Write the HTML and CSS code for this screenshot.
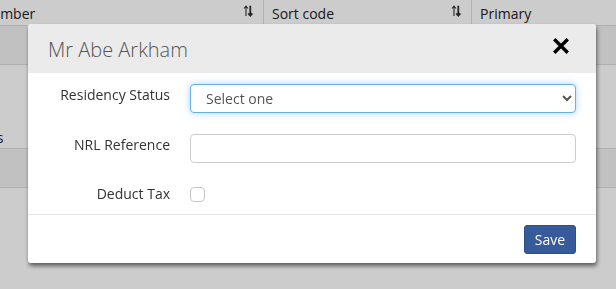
FILE: index.html
```html
<!DOCTYPE html>
<html lang="en">
<head>
    <meta charset="UTF-8">
    <meta name="viewport" content="width=device-width, initial-scale=1.0">
    <title>Payee details</title>
    <link rel="stylesheet" href="styles.css">
</head>
<body>
    <!-- page behind the dialog -->
    <div class="page">
        <table class="grid">
            <thead>
                <tr>
                    <th class="col-number"><span>Number</span><svg class="sort" viewBox="0 0 10 12"><path d="M3 11V1.5M1 3.5L3 1.2 5 3.5" /><path class="down" d="M7.3 0.8v9.5M5.3 8.3l2 2.3 2-2.3" /></svg></th>
                    <th class="col-sort"><span>Sort code</span><svg class="sort" viewBox="0 0 10 12"><path d="M3 11V1.5M1 3.5L3 1.2 5 3.5" /><path class="down" d="M7.3 0.8v9.5M5.3 8.3l2 2.3 2-2.3" /></svg></th>
                    <th class="col-primary"><span>Primary</span></th>
                </tr>
            </thead>
            <tbody>
                <tr class="row-short"><td></td><td></td><td></td></tr>
                <tr class="row-tall"><td><span class="cell-note">Banks</span></td><td></td><td></td></tr>
                <tr class="row-short"><td></td><td></td><td></td></tr>
            </tbody>
        </table>
    </div>

    <!-- dialog -->
    <div class="overlay">
        <div class="modal">
            <div class="modal-header">
                <h4 class="modal-title">Mr Abe Arkham</h4>
                <button class="close" aria-label="Close">
                    <svg viewBox="0 0 16 16"><path d="M2 2L14 14M14 2L2 14" /></svg>
                </button>
            </div>

            <form class="modal-body">
                <label class="field-label" for="residency">Residency Status</label>
                <select id="residency" class="field-control is-focused">
                    <option>Select one</option>
                    <option>Resident</option>
                    <option>Non-resident</option>
                </select>

                <label class="field-label" for="nrl">NRL Reference</label>
                <input id="nrl" type="text" class="field-control">

                <label class="field-label label-check" for="deduct">Deduct Tax</label>
                <div class="check-wrap"><input id="deduct" type="checkbox" class="check"></div>
            </form>

            <div class="modal-footer">
                <button class="btn-save">Save</button>
            </div>
        </div>
    </div>
</body>
</html>
```

FILE: styles.css
```css
/* base */
body {
    margin: 0;
    font-family: "Open Sans", "Liberation Sans", Arial, sans-serif;
    font-size: 14px;
    color: #333;
    background: #fff;
    overflow: hidden;
}

/* table behind the dialog */
.page {
    margin-left: -27px;
}

.grid {
    border-collapse: collapse;
    width: 720px;
}

.grid th {
    height: 25px;
    padding: 0 10px 0 8px;
    font-size: 14px;
    font-weight: 500;
    text-align: left;
    vertical-align: middle;
    border-bottom: 1px solid #ddd;
    color: #222;
}

.grid th span {
    display: inline-block;
    padding-top: 2px;
}

.col-number { width: 272px; }
.col-sort { width: 189px; border-left: 1px solid #ddd; }
.col-primary { border-left: 1px solid #ddd; }

.grid th .sort {
    float: right;
    width: 10px;
    height: 12px;
    margin-top: 3px;
    fill: none;
    stroke: #333;
    stroke-width: 1.1;
}

.grid th .sort .down {
    stroke-width: 1.8;
}

.grid td {
    border-bottom: 1px solid #ddd;
    padding: 0 8px;
}

.row-short td {
    height: 38px;
    background: #f2f2f2;
}

.row-tall td {
    height: 82px;
    vertical-align: bottom;
    padding-bottom: 1px;
}

.cell-note {
    margin-left: -17px;
    font-size: 14px;
    font-weight: 500;
    color: #222;
}

/* dimmed backdrop */
.overlay {
    position: fixed;
    inset: 0;
    background: rgba(0, 0, 0, 0.2);
    padding: 24px 20px 0 28px;
}

.modal {
    width: 568px;
    background: #fff;
    border-radius: 3px;
    box-shadow: 1px 3px 4px rgba(0, 0, 0, 0.55);
    overflow: hidden;
}

.modal-header {
    display: flex;
    align-items: center;
    justify-content: space-between;
    height: 49px;
    padding: 0 26px 0 20px;
    background: #ebebeb;
}

.modal-title {
    margin: 0;
    padding-top: 2px;
    font-size: 20px;
    font-weight: 300;
    color: #555;
}

.close {
    border: none;
    background: none;
    padding: 0;
    width: 18px;
    height: 18px;
    margin-bottom: 5px;
    cursor: pointer;
}

.close svg {
    display: block;
    width: 18px;
    height: 18px;
    fill: none;
    stroke: #000;
    stroke-width: 3;
}

/* form */
.modal-body {
    display: grid;
    grid-template-columns: 122px 1fr;
    column-gap: 20px;
    row-gap: 21px;
    padding: 11px 20px 12px;
}

.field-label {
    text-align: right;
    padding-top: 1px;
    color: #333;
}

.field-control {
    height: 29px;
    box-sizing: border-box;
    border: 1px solid #ccc;
    border-radius: 4px;
    background: #fff;
    font-family: inherit;
    font-size: 14px;
    color: #555;
    padding: 0 10px 0 11px;
}

.is-focused {
    border-color: #66afe9;
    outline: none;
    box-shadow: 0 0 7px rgba(102, 175, 233, 0.55);
}

.label-check {
    margin-top: 2px;
    padding-top: 0;
    line-height: 16px;
}

.check-wrap {
    display: flex;
    align-items: center;
    height: 16px;
    margin-top: 2px;
}

.check {
    appearance: none;
    margin: 0;
    width: 15px;
    height: 15px;
    border: 1px solid #c8c8c8;
    border-radius: 4px;
    background: #fff;
}

.modal-footer {
    display: flex;
    justify-content: flex-end;
    border-top: 1px solid #e5e5e5;
    padding: 10px 20px 9px;
}

.btn-save {
    height: 29px;
    width: 52px;
    border: 1px solid #2e4d8a;
    border-radius: 3px;
    background: #375a9a;
    color: #fff;
    font-family: inherit;
    font-size: 14px;
    cursor: pointer;
}
```
